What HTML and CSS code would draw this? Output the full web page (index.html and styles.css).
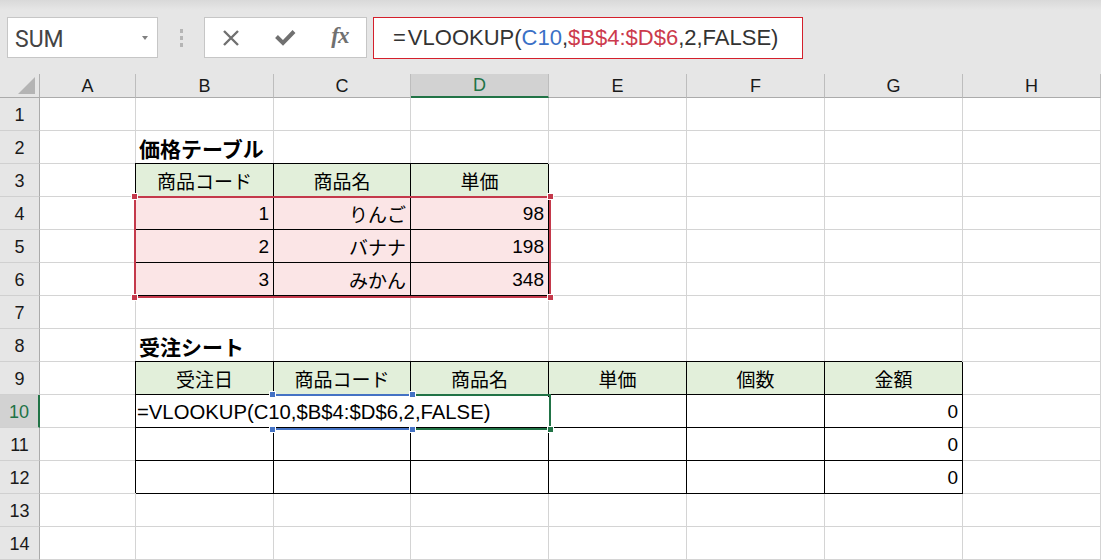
FILE: index.html
```html
<!DOCTYPE html>
<html lang="ja">
<head>
<meta charset="utf-8">
<title>Excel VLOOKUP</title>
<link rel="stylesheet" href="styles.css">
</head>
<body>
<div class="app">
  <div class="toolbar">
    <div class="namebox"><span class="name">SUM</span><span class="caret"></span></div>
    <div class="grip"><i></i><i></i><i></i></div>
    <div class="btns">
      <svg class="ico" width="18" height="18" viewBox="0 0 18 18"><path d="M2 2 L16 16 M16 2 L2 16" stroke="#707070" stroke-width="2.4" fill="none"/></svg>
      <svg class="ico" width="21" height="18" viewBox="0 0 21 18"><path d="M1.5 7.5 L8 14 L19 2.5" stroke="#707070" stroke-width="4" fill="none"/></svg>
      <span class="fx">fx</span>
    </div>
    <div class="formula"><span class="eq">=</span>VLOOKUP(<span class="ref1">C10</span>,<span class="ref2">$B$4:$D$6</span>,2,FALSE)</div>
  </div>

  <div class="sheet">
    <div class="corner"><svg width="18" height="17" viewBox="0 0 18 17"><path d="M17 0 L17 17 L0 17 Z" fill="#b4b4b4"/></svg></div>
    <div class="ch">A</div><div class="ch">B</div><div class="ch">C</div><div class="ch sel">D</div><div class="ch">E</div><div class="ch">F</div><div class="ch">G</div><div class="ch">H</div>

    <div class="rh">1</div><div class="c"></div><div class="c"></div><div class="c"></div><div class="c"></div><div class="c"></div><div class="c"></div><div class="c"></div><div class="c"></div>

    <div class="rh">2</div><div class="c"></div><div class="c title">価格テーブル</div><div class="c"></div><div class="c"></div><div class="c"></div><div class="c"></div><div class="c"></div><div class="c"></div>

    <div class="rh">3</div><div class="c"></div><div class="c t h">商品コード</div><div class="c t h">商品名</div><div class="c t h">単価</div><div class="c"></div><div class="c"></div><div class="c"></div><div class="c"></div>

    <div class="rh">4</div><div class="c"></div><div class="c t p r">1</div><div class="c t p r">りんご</div><div class="c t p r">98</div><div class="c"></div><div class="c"></div><div class="c"></div><div class="c"></div>

    <div class="rh">5</div><div class="c"></div><div class="c t p r">2</div><div class="c t p r">バナナ</div><div class="c t p r">198</div><div class="c"></div><div class="c"></div><div class="c"></div><div class="c"></div>

    <div class="rh">6</div><div class="c"></div><div class="c t p r">3</div><div class="c t p r">みかん</div><div class="c t p r">348</div><div class="c"></div><div class="c"></div><div class="c"></div><div class="c"></div>

    <div class="rh">7</div><div class="c"></div><div class="c"></div><div class="c"></div><div class="c"></div><div class="c"></div><div class="c"></div><div class="c"></div><div class="c"></div>

    <div class="rh">8</div><div class="c"></div><div class="c title">受注シート</div><div class="c"></div><div class="c"></div><div class="c"></div><div class="c"></div><div class="c"></div><div class="c"></div>

    <div class="rh">9</div><div class="c"></div><div class="c t h">受注日</div><div class="c t h">商品コード</div><div class="c t h">商品名</div><div class="c t h">単価</div><div class="c t h">個数</div><div class="c t h">金額</div><div class="c"></div>

    <div class="rh sel">10</div><div class="c"></div><div class="c t"></div><div class="c t"></div><div class="c t"></div><div class="c t"></div><div class="c t"></div><div class="c t r">0</div><div class="c"></div>

    <div class="rh">11</div><div class="c"></div><div class="c t"></div><div class="c t"></div><div class="c t"></div><div class="c t"></div><div class="c t"></div><div class="c t r">0</div><div class="c"></div>

    <div class="rh">12</div><div class="c"></div><div class="c t"></div><div class="c t"></div><div class="c t"></div><div class="c t"></div><div class="c t"></div><div class="c t r">0</div><div class="c"></div>

    <div class="rh">13</div><div class="c"></div><div class="c"></div><div class="c"></div><div class="c"></div><div class="c"></div><div class="c"></div><div class="c"></div><div class="c"></div>

    <div class="rh">14</div><div class="c"></div><div class="c"></div><div class="c"></div><div class="c"></div><div class="c"></div><div class="c"></div><div class="c"></div><div class="c"></div>

    <div class="range red"><i class="hd tl"></i><i class="hd tr"></i><i class="hd bl"></i><i class="hd br"></i></div>
    <div class="range green"><i class="hd br"></i></div>
    <div class="range blue"><i class="hd tl"></i><i class="hd tr"></i><i class="hd bl"></i><i class="hd br"></i></div>
    <div class="editor">=VLOOKUP(C10,$B$4:$D$6,2,FALSE)</div>
  </div>
</div>
</body>
</html>
```

FILE: styles.css
```css
* { box-sizing: border-box; }
html, body { margin: 0; padding: 0; }
body {
  width: 1101px;
  height: 560px;
  overflow: hidden;
  background: #ffffff;
  font-family: "Liberation Sans", "Noto Sans CJK JP", sans-serif;
}
.app { width: 1101px; height: 560px; overflow: hidden; }

/* ---------- toolbar ---------- */
.toolbar {
  height: 74px;
  background: linear-gradient(#d9d9d9 0px, #e6e6e6 10px, #e6e6e6 100%);
  display: flex;
  align-items: flex-start;
  padding: 17px 0 0 7px;
}
.namebox {
  width: 151px;
  height: 41px;
  background: #fff;
  border: 1px solid #c6c6c6;
  display: flex;
  align-items: center;
  justify-content: space-between;
  padding: 0 9px 0 7px;
}
.name {
  font-family: Roboto, "Liberation Sans", sans-serif;
  font-size: 23px;
  color: #444;
  padding-top: 3px;
}
.caret {
  width: 0; height: 0;
  border-left: 3px solid transparent;
  border-right: 3px solid transparent;
  border-top: 4px solid #808080;
}
.grip {
  width: 46px;
  height: 41px;
  display: flex;
  flex-direction: column;
  align-items: center;
  justify-content: center;
  gap: 3px;
}
.grip i { display: block; width: 3px; height: 4px; background: #b5b5b5; }
.btns {
  width: 163px;
  height: 41px;
  background: #fff;
  border: 1px solid #c6c6c6;
  display: flex;
  align-items: center;
  justify-content: space-around;
}
.ico { display: block; }
.fx {
  font-family: "Liberation Serif", serif;
  font-style: italic;
  font-weight: bold;
  font-size: 23px;
  color: #707070;
  letter-spacing: -1px;
  padding-bottom: 3px;
}
.formula {
  margin-left: 6px;
  width: 430px;
  height: 42px;
  background: #fff;
  border: 1px solid #d4202c;
  display: flex;
  align-items: center;
  padding-left: 19px;
  font-size: 22px;
  color: #333;
  white-space: nowrap;
}
.eq { margin-right: 2px; }
.ref1 { color: #3a70c6; }
.ref2 { color: #cc3a4c; }

/* ---------- sheet ---------- */
.sheet {
  position: relative;
  display: grid;
  grid-template-columns: 40px 96px 138px 137px 138px 138px 138px 138px 138px;
  grid-template-rows: 24px repeat(14, 33px);
  height: 486px;
}
.corner {
  background: #e6e6e6;
  border-right: 1px solid #b0b0b0;
  border-bottom: 1px solid #ababab;
  display: flex;
  align-items: flex-end;
  justify-content: flex-end;
  padding: 0 3px 3px 0;
}
.corner svg { display: block; }
.ch {
  background: #e6e6e6;
  border-right: 1px solid #bdbdbd;
  border-bottom: 1px solid #ababab;
  display: flex;
  align-items: center;
  justify-content: center;
  font-size: 18px;
  color: #1a1a1a;
  padding-top: 1px;
}
.ch.sel {
  background: #d2d2d2;
  color: #217346;
  border-bottom: 2px solid #217346;
}
.rh {
  background: #e6e6e6;
  border-right: 1px solid #ababab;
  border-bottom: 1px solid #d0d0d0;
  display: flex;
  align-items: center;
  justify-content: center;
  font-size: 18px;
  color: #1a1a1a;
  padding-top: 2px;
}
.rh.sel {
  background: #d2d2d2;
  color: #217346;
  border-right: 2px solid #217346;
}
.c {
  border-right: 1px solid #d4d4d4;
  border-bottom: 1px solid #d4d4d4;
  display: flex;
  align-items: center;
  padding: 1px 4px 0 4px;
  font-size: 19px;
  color: #000;
  white-space: nowrap;
  min-width: 0;
}
.c.title {
  font-weight: bold;
  font-size: 21px;
  padding-left: 3px;
  overflow: visible;
}
.c.t {
  border-right-color: #000;
  border-bottom-color: #000;
  box-shadow: -1px -1px 0 #000;
}
.c.h { background: #e2efda; justify-content: center; }
.c.p { background: #fbe5e6; }
.c.r { justify-content: flex-end; }

/* ---------- range overlays ---------- */
.range {
  position: absolute;
  border: 2px solid;
}
.range.red { left: 134px; top: 122px; width: 417px; height: 102px; border-color: #c4394b; }
.range.green { left: 411px; top: 320px; width: 140px; height: 36px; border-color: #217346; }
.range.blue { left: 272px; top: 320px; width: 141px; height: 36px; border-color: #4472c4; }
.hd {
  position: absolute;
  width: 7px;
  height: 7px;
  border: 1px solid #fff;
}
.red .hd { background: #c4394b; }
.blue .hd { background: #4472c4; }
.green .hd { background: #217346; }
.hd.tl { left: -5px; top: -5px; }
.hd.tr { right: -5px; top: -5px; }
.hd.bl { left: -5px; bottom: -5px; }
.hd.br { right: -5px; bottom: -5px; }

/* in-cell editor */
.editor {
  position: absolute;
  left: 136px;
  top: 323px;
  width: 413px;
  height: 30px;
  background: #fff;
  display: flex;
  align-items: center;
  padding: 1px 0 0 1px;
  font-size: 20.3px;
  color: #000;
  white-space: nowrap;
}
```
